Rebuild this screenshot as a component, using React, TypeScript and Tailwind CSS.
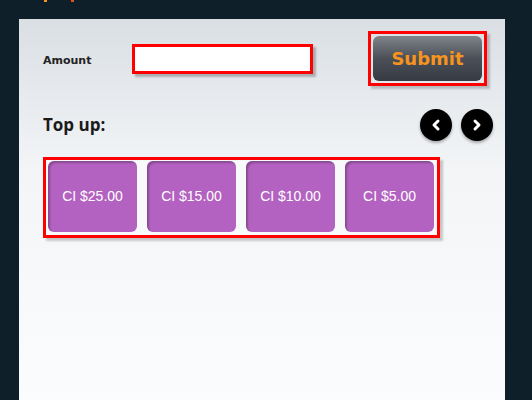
import { ChevronLeft, ChevronRight } from 'lucide-react'

const amounts = ['CI $25.00', 'CI $15.00', 'CI $10.00', 'CI $5.00']

export default function App() {
  return (
    <div className="h-[400px] w-[532px] overflow-hidden bg-[#0f1f2a]">
      {/* descenders of the page title peeking in from above */}
      <div className="relative h-[19px]">
        <span className="absolute left-[44px] top-0 h-[2px] w-[3px] bg-[#f7941d]" />
        <span className="absolute left-[71px] top-0 h-[2px] w-[3px] bg-[#e8501a]" />
      </div>

      <div className="mx-[19px] h-[381px] w-[486px] bg-gradient-to-b from-[#dadfe4] via-[#f3f5f7] via-40% to-[#fbfcfd] pl-[24px] pr-[12px]">
        <div className="flex h-[84px] items-start pr-[6px]">
          <label
            className="mt-[34px] w-[89px] text-[11px] font-bold text-[#222]"
            style={{ fontFamily: 'Verdana, "DejaVu Sans", sans-serif' }}
          >
            Amount
          </label>
          <input
            type="text"
            className="mt-[25px] h-[30px] w-[181px] border-[3px] border-[#ff0000] bg-white shadow-[3px_3px_2px_rgba(0,0,0,0.25)] outline-none"
          />
          <div className="ml-auto mt-[12px] border-[3px] border-[#ff0000] p-[2px] shadow-[3px_3px_2px_rgba(0,0,0,0.2)]">
            <button
              className="flex h-[45px] w-[109px] items-center justify-center rounded-[6px] bg-gradient-to-b from-[#80858c] via-[#4b5058] via-50% to-[#363b43] text-[18px] font-bold text-[#f7941d]"
              style={{ fontFamily: '"DejaVu Sans", Verdana, sans-serif' }}
            >
              Submit
            </button>
          </div>
        </div>

        <div className="mt-[6px] flex items-center">
          <h2
            className="text-[17px] font-bold text-[#1a1a1a]"
            style={{ fontFamily: '"Open Sans", "Noto Sans", sans-serif' }}
          >
            Top up:
          </h2>
          <div className="ml-auto flex gap-[9px]">
            <button className="flex h-[32px] w-[32px] items-center justify-center rounded-full bg-black text-white shadow-[0_2px_3px_rgba(0,0,0,0.3)]">
              <ChevronLeft size={16} strokeWidth={4.5} />
            </button>
            <button className="flex h-[32px] w-[32px] items-center justify-center rounded-full bg-black text-white shadow-[0_2px_3px_rgba(0,0,0,0.3)]">
              <ChevronRight size={16} strokeWidth={4.5} />
            </button>
          </div>
        </div>

        <div className="mt-[16px] inline-flex gap-[10px] border-[3px] border-[#ff0000] bg-[#f8f9fa] p-[1px] pl-[2px] pr-[3px] pb-[3px] shadow-[3px_3px_2px_rgba(0,0,0,0.2)]">
          {amounts.map((a) => (
            <button
              key={a}
              className="flex h-[71px] w-[89px] items-center justify-center rounded-[6px] bg-[#b462c1] text-[14px] text-white shadow-[inset_2px_2px_2px_rgba(0,0,0,0.25)]"
              style={{ fontFamily: '"Liberation Sans", Arial, sans-serif' }}
            >
              {a}
            </button>
          ))}
        </div>
      </div>
    </div>
  )
}
